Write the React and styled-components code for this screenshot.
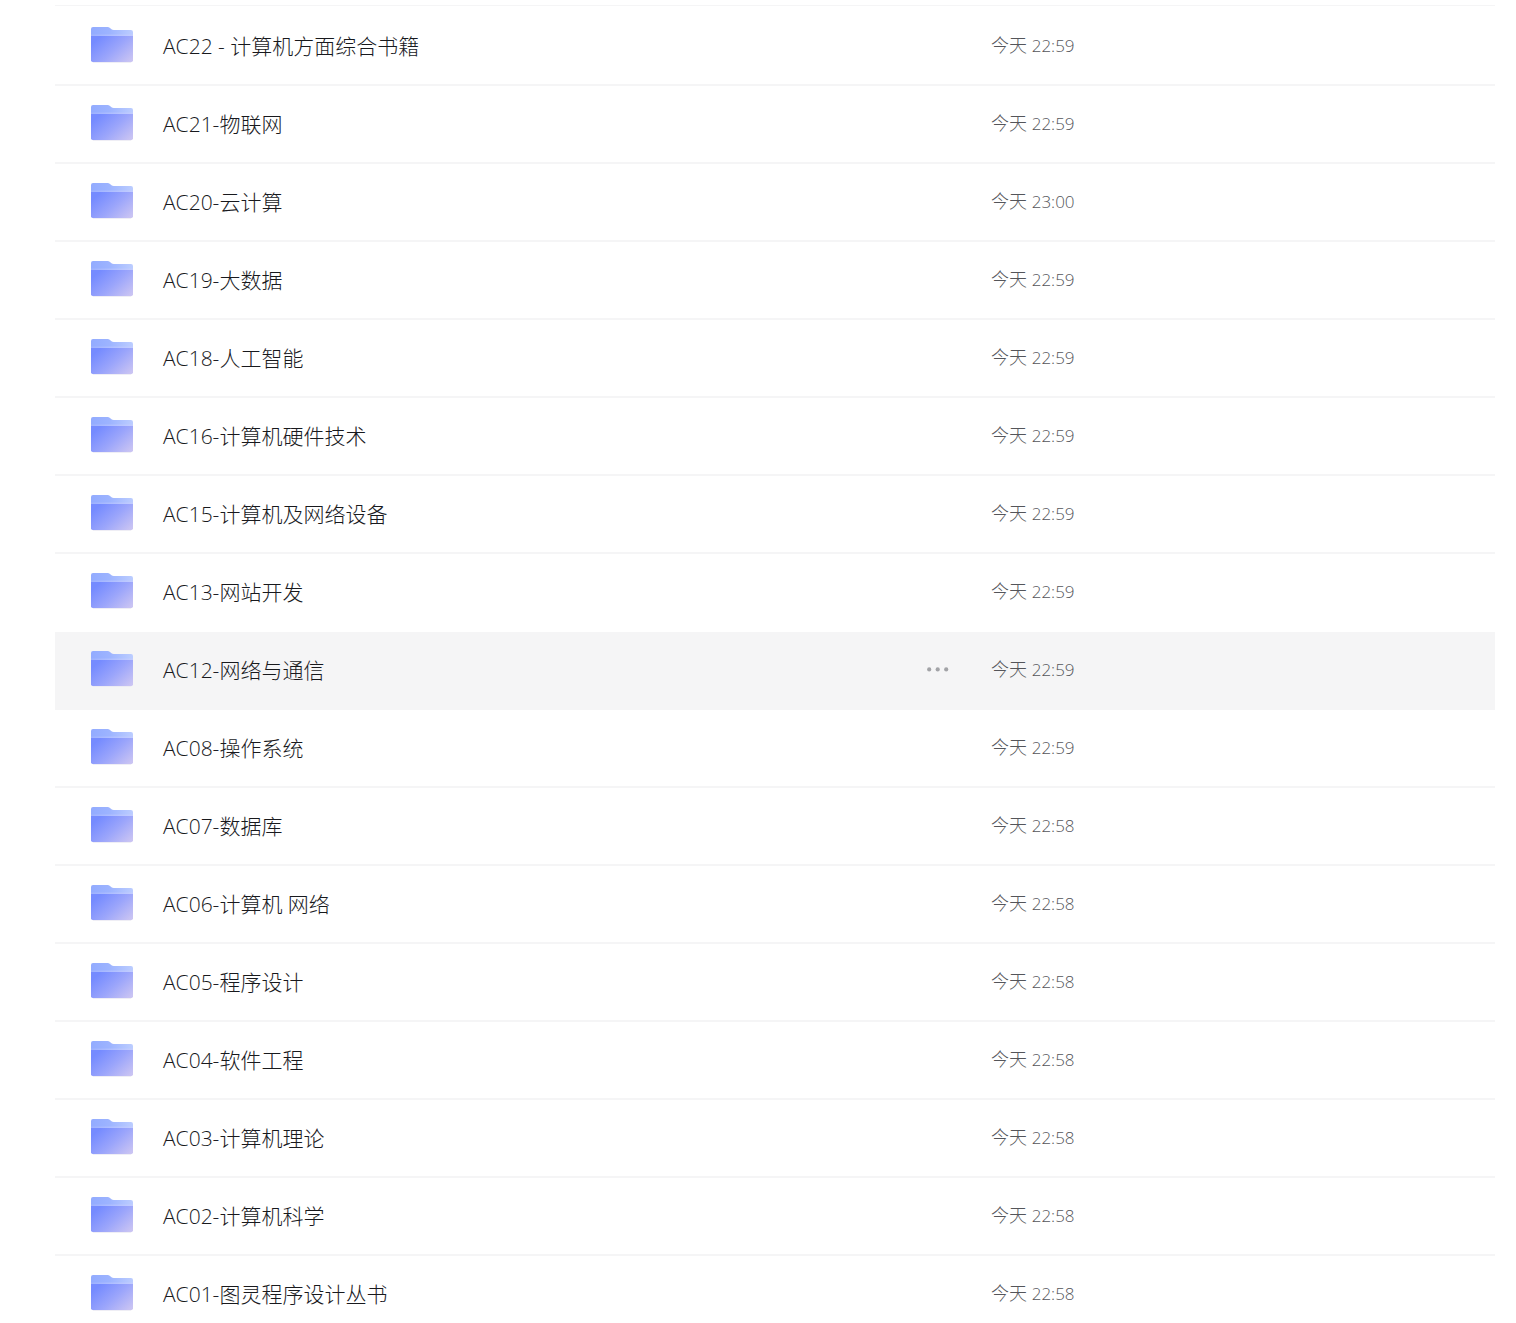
import React from "react";
import styled, { createGlobalStyle } from "styled-components";

const GlobalStyle = createGlobalStyle`
  body {
    margin: 0;
    background: #fff;
    font-family: "Open Sans", "Noto Sans CJK SC", sans-serif;
    font-weight: 300;
  }
`;

const Page = styled.main`
  padding: 5px 21px 0 55px;
`;

const ListWrapper = styled.div`
  border-top: 1px solid #f5f5f6;
  padding-top: 2px;
`;

const FileTable = styled.table`
  width: 100%;
  table-layout: fixed;
  border-collapse: separate;
  border-spacing: 0;
`;

const FileRow = styled.tr`
  height: 78px;
  background: ${({ $active }) => ($active ? "#f5f5f6" : "#fff")};
`;

const Cell = styled.td`
  box-sizing: border-box;
  height: 78px;
  padding: 0;
  border-bottom: 2px solid ${({ $line }) => ($line ? "#f5f5f6" : "transparent")};
`;

const NameCell = styled(Cell)`
  width: 65%;
`;

const NameContent = styled.div`
  display: flex;
  align-items: center;
  padding: 0 42px 0 36px;
`;

const FolderSvg = styled.svg`
  flex: none;
  width: 42px;
  height: 38px;
  margin-right: 30px;
`;

const FileLink = styled.a`
  flex: 1;
  color: #18191d;
  font-size: 21px;
  line-height: 30px;
  text-decoration: none;
`;

const MoreButton = styled.button`
  display: flex;
  padding: 0 0 2px;
  border: 0;
  background: none;
  cursor: pointer;
`;

const Time = styled.time`
  display: block;
  padding-bottom: 2px;
  color: #54555a;
  font-size: 18px;
  line-height: 26px;
`;

const Clock = styled.span`
  font-size: 17px;
`;

const files = [
  { name: "AC22 - 计算机方面综合书籍", time: "22:59" },
  { name: "AC21-物联网", time: "22:59" },
  { name: "AC20-云计算", time: "23:00" },
  { name: "AC19-大数据", time: "22:59" },
  { name: "AC18-人工智能", time: "22:59" },
  { name: "AC16-计算机硬件技术", time: "22:59" },
  { name: "AC15-计算机及网络设备", time: "22:59" },
  { name: "AC13-网站开发", time: "22:59" },
  { name: "AC12-网络与通信", time: "22:59" },
  { name: "AC08-操作系统", time: "22:59" },
  { name: "AC07-数据库", time: "22:58" },
  { name: "AC06-计算机 网络", time: "22:58" },
  { name: "AC05-程序设计", time: "22:58" },
  { name: "AC04-软件工程", time: "22:58" },
  { name: "AC03-计算机理论", time: "22:58" },
  { name: "AC02-计算机科学", time: "22:58" },
  { name: "AC01-图灵程序设计丛书", time: "22:58" }
];

const activeIndex = 8;

const FolderIcon = () => (
  <FolderSvg viewBox="0 0 42 38" aria-hidden="true">
    <path
      d="M0 2Q0 0 2 0H16.5Q18 0 19 1L20.5 2.3Q21.3 3 22.8 3H40Q42 3 42 5V12H0Z"
      fill="url(#folder-back)"
    />
    <path d="M1 34H41L40 35.8H2Z" fill="#eae9f2" />
    <path
      d="M0 8H42V33.3Q42 35 40.3 35H1.7Q0 35 0 33.3Z"
      fill="url(#folder-front)"
    />
    <path d="M0 7.4H42V9H0Z" fill="url(#folder-edge)" />
  </FolderSvg>
);

const MoreIcon = () => (
  <svg width="22" height="6" viewBox="0 0 22 6" fill="#a2a3a7">
    <circle cx="2.2" cy="3.4" r="2.1" />
    <circle cx="10.7" cy="3.4" r="2.1" />
    <circle cx="19.2" cy="3.4" r="2.1" />
  </svg>
);

// shared by every folder icon in the list
const IconGradients = () => (
  <svg width="0" height="0" display="block" aria-hidden="true">
    <defs>
      <linearGradient id="folder-back" x1="0" y1="0" x2="1" y2="0">
        <stop offset="0" stopColor="#92abff" />
        <stop offset="0.45" stopColor="#9db4ff" />
        <stop offset="1" stopColor="#bccdff" />
      </linearGradient>
      <linearGradient id="folder-front" x1="0.08" y1="0.25" x2="1" y2="0.9">
        <stop offset="0" stopColor="#758bff" />
        <stop offset="0.5" stopColor="#9ba5fb" />
        <stop offset="1" stopColor="#cac4f3" />
      </linearGradient>
      <linearGradient id="folder-edge" x1="0" y1="0" x2="1" y2="0">
        <stop offset="0" stopColor="#9db1ff" />
        <stop offset="1" stopColor="#c3cdff" />
      </linearGradient>
    </defs>
  </svg>
);

const File = ({ file, active, line }) => (
  <FileRow $active={active}>
    <NameCell $line={line}>
      <NameContent>
        <FolderIcon />
        <FileLink href="#">{file.name}</FileLink>
        {active && (
          <MoreButton type="button" aria-label="更多">
            <MoreIcon />
          </MoreButton>
        )}
      </NameContent>
    </NameCell>
    <Cell $line={line}>
      <Time>
        今天 <Clock>{file.time}</Clock>
      </Time>
    </Cell>
  </FileRow>
);

const App = () => (
  <Page>
    <GlobalStyle />
    <IconGradients />
    <ListWrapper>
      <FileTable>
        <tbody>
          {files.map((file, index) => (
            <File
              key={file.name}
              file={file}
              active={index === activeIndex}
              line={index !== activeIndex && index !== activeIndex - 1}
            />
          ))}
        </tbody>
      </FileTable>
    </ListWrapper>
  </Page>
);

export default App;
